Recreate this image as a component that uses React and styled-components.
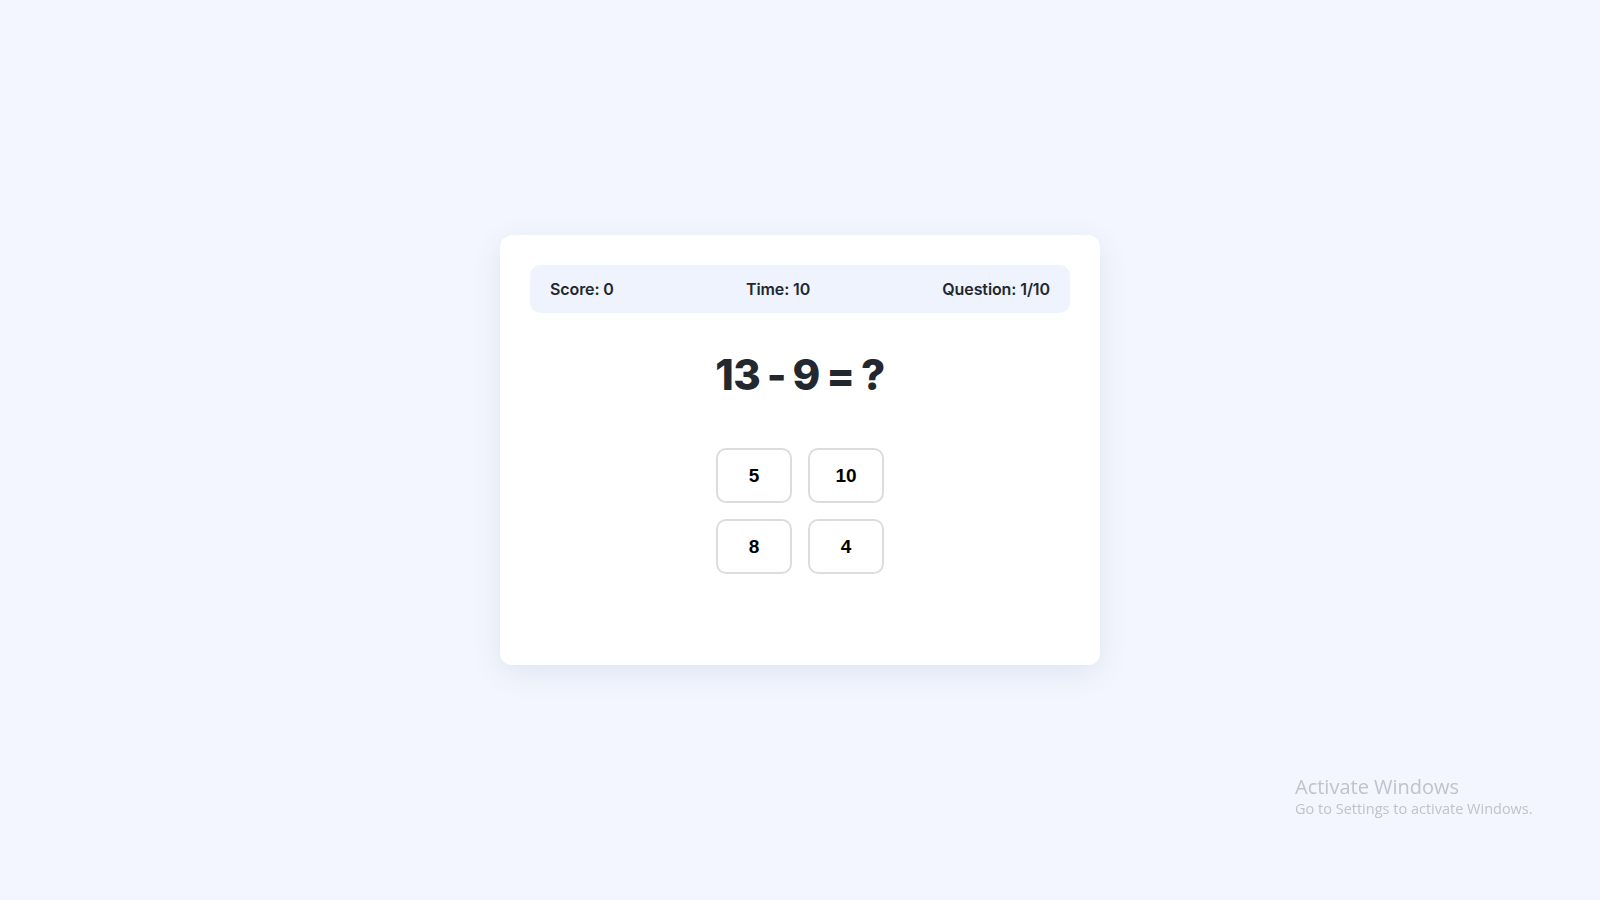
import React from "react";
import styled, { createGlobalStyle } from "styled-components";

const GlobalStyle = createGlobalStyle`
  html, body {
    margin: 0;
    padding: 0;
    height: 100%;
  }
  body {
    background: #f3f6fe;
    font-family: "Inter", "Liberation Sans", sans-serif;
    color: #2d3436;
  }
  #root {
    height: 100%;
  }
`;

const Page = styled.div`
  height: 100vh;
  display: flex;
  align-items: center;
  justify-content: center;
`;

const Card = styled.div`
  box-sizing: border-box;
  width: 600px;
  height: 430px;
  padding: 30px;
  background: #ffffff;
  border-radius: 12px;
  box-shadow: 0 8px 30px rgba(60, 80, 130, 0.1);
  display: flex;
  flex-direction: column;
  align-items: center;
`;

const Stats = styled.div`
  box-sizing: border-box;
  width: 100%;
  height: 48px;
  padding: 0 20px;
  background: #eef3fd;
  border-radius: 10px;
  display: flex;
  align-items: center;
  justify-content: space-between;
`;

const Stat = styled.span`
  font-family: "Inter", sans-serif;
  font-size: 16px;
  font-weight: 600;
  color: #23272e;
  letter-spacing: -0.1px;
`;

const Equation = styled.h1`
  margin: 32px 0 0;
  height: 60px;
  line-height: 60px;
  font-family: "Inter", sans-serif;
  font-size: 42px;
  font-weight: 800;
  color: #23272e;
  letter-spacing: -0.6px;
  word-spacing: -2px;
`;

const Answers = styled.div`
  margin-top: 43px;
  display: grid;
  grid-template-columns: repeat(2, 76px);
  gap: 16px;
`;

const Answer = styled.button`
  box-sizing: border-box;
  width: 76px;
  height: 55px;
  background: #ffffff;
  border: 2px solid #dcdcdc;
  border-radius: 10px;
  font-family: "Liberation Sans", Arial, sans-serif;
  font-size: 19px;
  font-weight: 700;
  color: #000000;
  cursor: pointer;
`;

const Watermark = styled.div`
  position: fixed;
  left: 1295px;
  top: 775px;
  font-family: "Open Sans", "Noto Sans", sans-serif;
  color: #bfc3ca;
`;

const WatermarkTitle = styled.div`
  font-size: 20px;
  line-height: 24px;
`;

const WatermarkText = styled.div`
  font-size: 14.5px;
  line-height: 20px;
`;

const answers = [5, 10, 8, 4];

export default function App() {
  return (
    <>
      <GlobalStyle />
      <Page>
        <Card>
          <Stats>
            <Stat>Score: 0</Stat>
            <Stat>Time: 10</Stat>
            <Stat>Question: 1/10</Stat>
          </Stats>
          <Equation>13 - 9 = ?</Equation>
          <Answers>
            {answers.map((a) => (
              <Answer key={a}>{a}</Answer>
            ))}
          </Answers>
        </Card>
      </Page>
      <Watermark>
        <WatermarkTitle>Activate Windows</WatermarkTitle>
        <WatermarkText>Go to Settings to activate Windows.</WatermarkText>
      </Watermark>
    </>
  );
}
